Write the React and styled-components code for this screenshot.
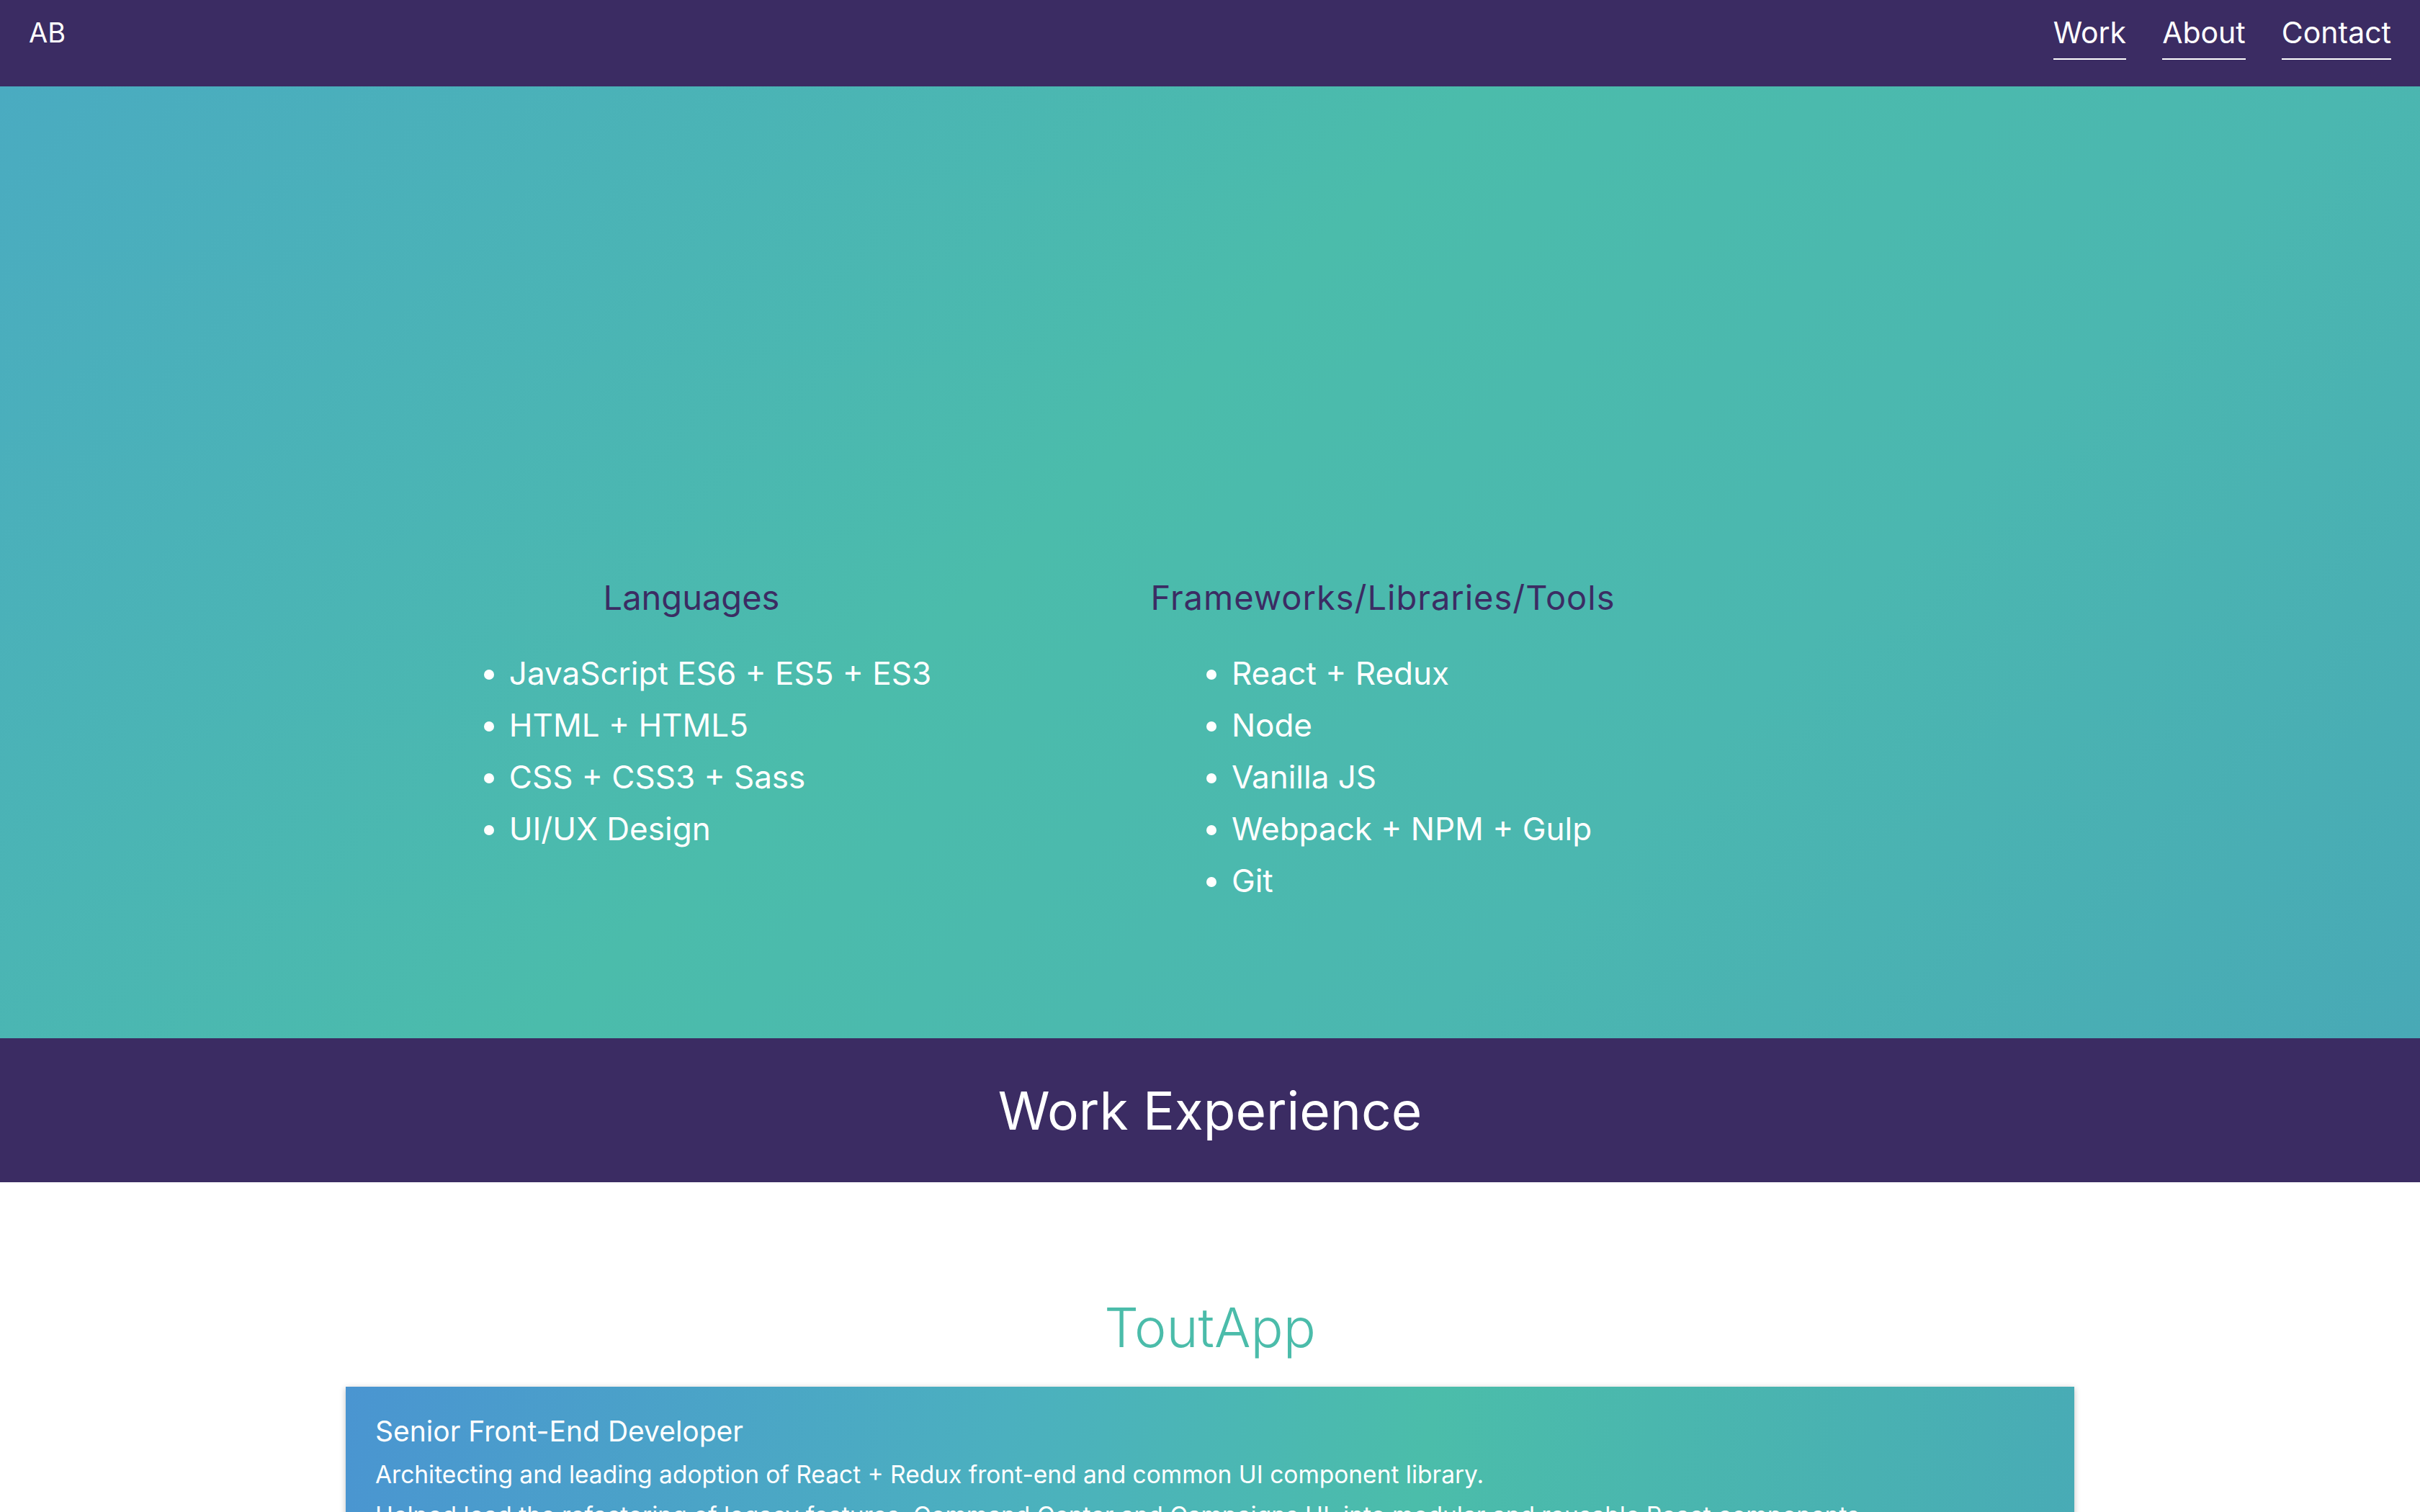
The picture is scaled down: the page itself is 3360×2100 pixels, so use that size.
import styled, { createGlobalStyle } from "styled-components";

const GlobalStyle = createGlobalStyle`
  html, body {
    margin: 0;
    padding: 0;
    background: #ffffff;
    font-family: Inter, "Open Sans", "Liberation Sans", sans-serif;
  }
  * {
    box-sizing: border-box;
  }
`;

const Page = styled.div`
  display: flex;
  flex-direction: column;
  height: 2100px;
  overflow: hidden;
`;

const Header = styled.header`
  height: 120px;
  background-color: #3b2c63;
  display: flex;
  justify-content: space-between;
  align-items: flex-start;
  padding: 25px 40px 0;
  flex-shrink: 0;
`;

const Logo = styled.a`
  color: #ffffff;
  font-size: 38px;
  line-height: 1;
  text-decoration: none;
  margin-top: 1px;
`;

const Nav = styled.nav`
  display: flex;
  gap: 50px;
`;

const NavLink = styled.a`
  color: #ffffff;
  font-size: 41px;
  line-height: 1;
  text-decoration: none;
  padding-bottom: 15px;
  border-bottom: 2px solid #ffffff;
`;

const Hero = styled.section`
  height: 1322px;
  flex-shrink: 0;
  padding-top: 682px;
  background: linear-gradient(
    135deg,
    #4aabc1 0%,
    #4bbcab 44%,
    #4bb7b0 70%,
    #48a9b6 100%
  );
`;

const Skills = styled.div`
  width: 2400px;
  margin: 0 auto;
  display: flex;
`;

const SkillColumn = styled.div`
  width: 960px;
  text-align: center;
`;

const SkillTitle = styled.h3`
  margin: 0 0 42px;
  font-size: 47px;
  font-weight: 400;
  line-height: 1.2;
  color: #3b2c63;
  letter-spacing: ${(p) => (p.$wide ? "1px" : "0")};
`;

const SkillList = styled.ul`
  display: inline-block;
  margin: 0;
  padding-left: 80px;
  text-align: left;
  list-style: disc;
`;

const SkillItem = styled.li`
  color: #ffffff;
  font-size: 44px;
  line-height: 71.8px;
`;

const Banner = styled.div`
  height: 200px;
  flex-shrink: 0;
  background-color: #3b2c63;
  display: flex;
  align-items: center;
  justify-content: center;
`;

const BannerTitle = styled.h2`
  margin: 0;
  color: #ffffff;
  font-size: 73px;
  font-weight: 400;
  line-height: 1;
`;

const WorkSection = styled.section`
  padding-top: 157px;
`;

const Company = styled.h3`
  margin: 0 0 37px;
  text-align: center;
  color: #4bbcaa;
  font-size: 75px;
  font-weight: 300;
  line-height: 1.2;
`;

const JobCard = styled.article`
  width: 2400px;
  margin: 0 auto;
  padding: 37px 41px;
  background: linear-gradient(
    100deg,
    #4a95d1 0%,
    #4bb0bf 38%,
    #4bbdaa 62%,
    #48abb6 100%
  );
  box-shadow: 0 2px 8px rgba(0, 0, 0, 0.25);
  color: #ffffff;
`;

const JobTitle = styled.h4`
  margin: 0 0 6px;
  font-size: 39px;
  font-weight: 400;
  line-height: 1.3;
`;

const JobText = styled.p`
  margin: 0;
  font-size: 33.5px;
  line-height: 57px;
`;

const languages = [
  "JavaScript ES6 + ES5 + ES3",
  "HTML + HTML5",
  "CSS + CSS3 + Sass",
  "UI/UX Design",
];

const tools = [
  "React + Redux",
  "Node",
  "Vanilla JS",
  "Webpack + NPM + Gulp",
  "Git",
];

function App() {
  return (
    <Page>
      <GlobalStyle />
      <Header>
        <Logo href="#">AB</Logo>
        <Nav>
          <NavLink href="#work">Work</NavLink>
          <NavLink href="#about">About</NavLink>
          <NavLink href="#contact">Contact</NavLink>
        </Nav>
      </Header>

      <Hero>
        <Skills>
          <SkillColumn>
            <SkillTitle>Languages</SkillTitle>
            <SkillList>
              {languages.map((item) => (
                <SkillItem key={item}>{item}</SkillItem>
              ))}
            </SkillList>
          </SkillColumn>
          <SkillColumn>
            <SkillTitle $wide>Frameworks/Libraries/Tools</SkillTitle>
            <SkillList>
              {tools.map((item) => (
                <SkillItem key={item}>{item}</SkillItem>
              ))}
            </SkillList>
          </SkillColumn>
        </Skills>
      </Hero>

      <Banner>
        <BannerTitle>Work Experience</BannerTitle>
      </Banner>

      <WorkSection id="work">
        <Company>ToutApp</Company>
        <JobCard>
          <JobTitle>Senior Front-End Developer</JobTitle>
          <JobText>
            Architecting and leading adoption of React + Redux front-end and
            common UI component library.
          </JobText>
          <JobText>
            Helped lead the refactoring of legacy features, Command Center and
            Campaigns UI, into modular and reusable React components.
          </JobText>
        </JobCard>
      </WorkSection>
    </Page>
  );
}

export default App;
